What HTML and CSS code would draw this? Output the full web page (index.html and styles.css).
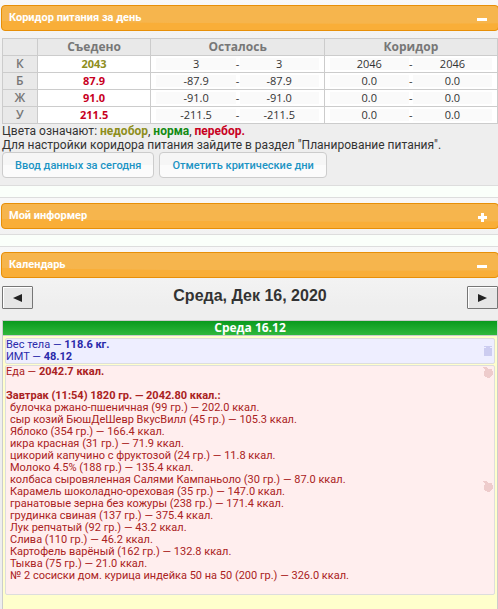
FILE: index.html
```
<!DOCTYPE html>
<html lang="ru">

<head>
  <meta charset="utf-8">
  <title>Календарь</title>
  <link rel="stylesheet" href="styles.css">
</head>

<body>
  <section class="panel">
    <h3 class="panel-header">
      Коридор питания за день
      <button type="button" class="toggle" aria-label="Свернуть">
        <svg width="10" height="10" viewBox="0 0 10 10"><path d="M0 3h10v3H0z" fill="#fff"/></svg>
      </button>
    </h3>
    <table class="corridor">
      <thead>
        <tr>
          <th class="name"></th>
          <th class="eaten">Съедено</th>
          <th>Осталось</th>
          <th>Коридор</th>
        </tr>
      </thead>
      <tbody>
        <tr>
          <th>К</th>
          <td class="under">2043</td>
          <td><div class="range"><span>3</span><i>-</i><span>3</span></div></td>
          <td><div class="range"><span>2046</span><i>-</i><span>2046</span></div></td>
        </tr>
        <tr>
          <th>Б</th>
          <td class="over">87.9</td>
          <td><div class="range"><span>-87.9</span><i>-</i><span>-87.9</span></div></td>
          <td><div class="range"><span>0.0</span><i>-</i><span>0.0</span></div></td>
        </tr>
        <tr>
          <th>Ж</th>
          <td class="over">91.0</td>
          <td><div class="range"><span>-91.0</span><i>-</i><span>-91.0</span></div></td>
          <td><div class="range"><span>0.0</span><i>-</i><span>0.0</span></div></td>
        </tr>
        <tr>
          <th>У</th>
          <td class="over">211.5</td>
          <td><div class="range"><span>-211.5</span><i>-</i><span>-211.5</span></div></td>
          <td><div class="range"><span>0.0</span><i>-</i><span>0.0</span></div></td>
        </tr>
      </tbody>
    </table>
    <p class="legend">
      Цвета означают: <b class="under">недобор</b>, <b class="normal">норма</b>, <b class="over">перебор.</b><br>
      Для настройки коридора питания зайдите в раздел "Планирование питания".
    </p>
    <div class="actions">
      <button type="button">Ввод данных за сегодня</button>
      <button type="button">Отметить критические дни</button>
    </div>
  </section>

  <section class="panel">
    <h3 class="panel-header">
      Мой информер
      <button type="button" class="toggle" aria-label="Развернуть">
        <svg width="10" height="10" viewBox="0 0 10 10"><path d="M4 0h3v3h3v3H7v3H4V6H1V3h3z" fill="#fff"/></svg>
      </button>
    </h3>
  </section>

  <section class="panel calendar-panel">
    <h3 class="panel-header">
      Календарь
      <button type="button" class="toggle" aria-label="Свернуть">
        <svg width="10" height="10" viewBox="0 0 10 10"><path d="M0 3h10v3H0z" fill="#fff"/></svg>
      </button>
    </h3>
    <div class="calendar-nav">
      <button type="button" aria-label="Предыдущий день">
        <svg width="9" height="8" viewBox="0 0 9 8"><path d="M9 0v8L0 4z" fill="#222"/></svg>
      </button>
      <h2>Среда, Дек 16, 2020</h2>
      <button type="button" aria-label="Следующий день">
        <svg width="9" height="8" viewBox="0 0 9 8"><path d="M0 0v8l9-4z" fill="#222"/></svg>
      </button>
    </div>

    <div class="day">
      <h4>Среда 16.12</h4>
      <div class="events">
        <div class="event weight">
          <div class="text">
            Вес тела — <b>118.6 кг.</b><br>
            ИМТ — <b>48.12</b>
          </div>
          <div class="icons">
            <svg width="10" height="12" viewBox="0 0 10 12"><path d="M1 1h8v1H7v1h2v8H1V3h2V2H1z" fill="#ccccf0"/></svg>
          </div>
        </div>
        <div class="event food">
          <div class="text">
            Еда — <b>2042.7 ккал.</b>
            <h5>Завтрак (11:54) 1820 гр. — 2042.80 ккал.:</h5>
            <ul>
              <li>булочка ржано-пшеничная (99 гр.) — 202.0 ккал.</li>
              <li>сыр козий БюшДеШевр ВкусВилл (45 гр.) — 105.3 ккал.</li>
              <li>Яблоко (354 гр.) — 166.4 ккал.</li>
              <li>икра красная (31 гр.) — 71.9 ккал.</li>
              <li>цикорий капучино с фруктозой (24 гр.) — 11.8 ккал.</li>
              <li>Молоко 4.5% (188 гр.) — 135.4 ккал.</li>
              <li>колбаса сыровяленная Салями Кампаньоло (30 гр.) — 87.0 ккал.</li>
              <li>Карамель шоколадно-ореховая (35 гр.) — 147.0 ккал.</li>
              <li>гранатовые зерна без кожуры (238 гр.) — 171.4 ккал.</li>
              <li>грудинка свиная (137 гр.) — 375.4 ккал.</li>
              <li>Лук репчатый (92 гр.) — 43.2 ккал.</li>
              <li>Слива (110 гр.) — 46.2 ккал.</li>
              <li>Картофель варёный (162 гр.) — 132.8 ккал.</li>
              <li>Тыква (75 гр.) — 21.0 ккал.</li>
              <li>№ 2 сосиски дом. курица индейка 50 на 50 (200 гр.) — 326.0 ккал.</li>
            </ul>
          </div>
          <div class="icons">
            <svg width="10" height="12" viewBox="0 0 10 12"><path d="M0 1h4v1h1v1h4v2h1v4H9v1H8v1H7v1H4v-1H2v-1H1V5h1V3H1V2H0z" fill="#eecccc"/></svg>
            <svg width="10" height="12" viewBox="0 0 10 12"><path d="M0 1h4v1h1v1h4v2h1v4H9v1H8v1H7v1H4v-1H2v-1H1V5h1V3H1V2H0z" fill="#eecccc"/></svg>
          </div>
        </div>
      </div>
    </div>
  </section>
</body>

</html>
```
FILE: styles.css
```
body {
  margin: 0;
  min-height: 100vh;
  display: flex;
  flex-direction: column;
  gap: 11px;
  overflow-x: hidden;
  background: #fafffa;
  color: #333;
  font-family: Roboto, "Open Sans", sans-serif;
  font-size: 12px;
  line-height: 14px;
}

h2,
h3,
h4,
h5,
p,
ul {
  margin: 0;
  padding: 0;
}

button {
  font-family: inherit;
  cursor: pointer;
}

.panel {
  padding: 5px 0;
  border-top: 1px solid #ddd;
  border-bottom: 1px solid #ddd;
  background: linear-gradient(#f8f8f8, #eee 60px);
}

.panel:first-child {
  padding: 5px 0 7px;
  border-top: 0;
}

.panel-header {
  display: flex;
  align-items: center;
  justify-content: space-between;
  height: 24px;
  margin: 0 -1px 0 1px;
  padding: 0 11px 0 7px;
  border: 1px solid #e78f08;
  border-radius: 4px;
  background: radial-gradient(ellipse 700px 18px at 75% 0, #f6b54d 96%, transparent), #f9ae38;
  color: #fff;
  font-size: 11px;
}

.toggle {
  display: flex;
  padding: 4px 0 0;
  border: 0;
  background: none;
}

/* daily totals */
.corridor {
  width: calc(100% - 2px);
  margin: 7px 0 0 2px;
  border-collapse: collapse;
  table-layout: fixed;
  background: #fff;
  font-family: "Open Sans", sans-serif;
  font-size: 11px;
  text-align: center;
}

.corridor th,
.corridor td {
  height: 16px;
  padding: 0 5px;
  border: 1px solid #ccc;
  line-height: 16px;
}

.corridor th {
  background: #e9e9e9;
  color: #777;
  font-size: 12px;
}

.corridor tbody th {
  font-weight: 600;
}

.corridor .name {
  width: 7%;
  box-sizing: border-box;
}

.corridor .eaten {
  width: 23%;
  box-sizing: border-box;
}

.corridor td {
  font-weight: bold;
}

.range {
  display: grid;
  grid-template-columns: 1fr 4px 1fr;
  font-weight: normal;
}

.range span {
  height: 12px;
  background: #fafafa;
  line-height: 12px;
}

.range i {
  font-style: normal;
  line-height: 12px;
}

.under {
  color: #8e8e1c;
}

.normal {
  color: #128a12;
}

.over {
  color: #c8001e;
}

.legend {
  padding-left: 2px;
}

.actions {
  display: flex;
  gap: 5px;
  padding-left: 2px;
}

.actions button {
  height: 26px;
  padding: 0 12px;
  border: 1px solid #ccc;
  border-radius: 4px;
  background: linear-gradient(#f6f6f6 50%, #fbfbfb 50%);
  color: #1c94c4;
  font-size: 11px;
  font-weight: 500;
}

/* calendar */
.calendar-panel {
  flex: 1;
  display: flex;
  flex-direction: column;
  padding-bottom: 0;
  border-bottom: 0;
}

.calendar-nav {
  display: flex;
  align-items: center;
  justify-content: space-between;
  padding: 8px 0 11px 2px;
}

.calendar-nav button {
  display: flex;
  align-items: center;
  justify-content: center;
  width: 31px;
  height: 23px;
  padding: 0;
  border: 1px solid #767676;
  border-radius: 1px;
  background: #e6e6e6;
  box-shadow: inset 1px 1px #fff;
}

.calendar-nav h2 {
  padding-bottom: 3px;
  font: bold 16px/20px "Liberation Sans", Arial, sans-serif;
}

.day {
  flex: 1;
  display: flex;
  flex-direction: column;
  margin-left: 2px;
  border: 1px solid #ccc;
  border-bottom: 0;
}

.day h4 {
  height: 14px;
  border-bottom: 1px solid #ccc;
  background: linear-gradient(#0a9a1e, #2fb83c);
  color: #fff;
  font-family: "Open Sans", sans-serif;
  font-size: 12px;
  line-height: 14px;
  text-align: center;
}

.events {
  flex: 1;
  padding: 2px;
  background: #ffffcc;
}

.event {
  display: flex;
  justify-content: space-between;
  margin-bottom: 1px;
  border: 1px solid #ddd;
  border-radius: 2px;
  font-size: 11px;
  line-height: 12px;
}

.weight {
  background: #eeeeff;
  color: #2a2aaa;
}

.food {
  background: #ffeeee;
  color: #aa2222;
}

.food .text {
  padding-bottom: 12px;
}

.food h5 {
  padding-top: 12px;
  font-size: 11px;
}

.food ul {
  padding-left: 4px;
  list-style: none;
}

.icons {
  display: flex;
  flex-direction: column;
  justify-content: space-around;
  padding-right: 1px;
}

.food .icons {
  justify-content: flex-start;
  gap: 102px;
}
```
